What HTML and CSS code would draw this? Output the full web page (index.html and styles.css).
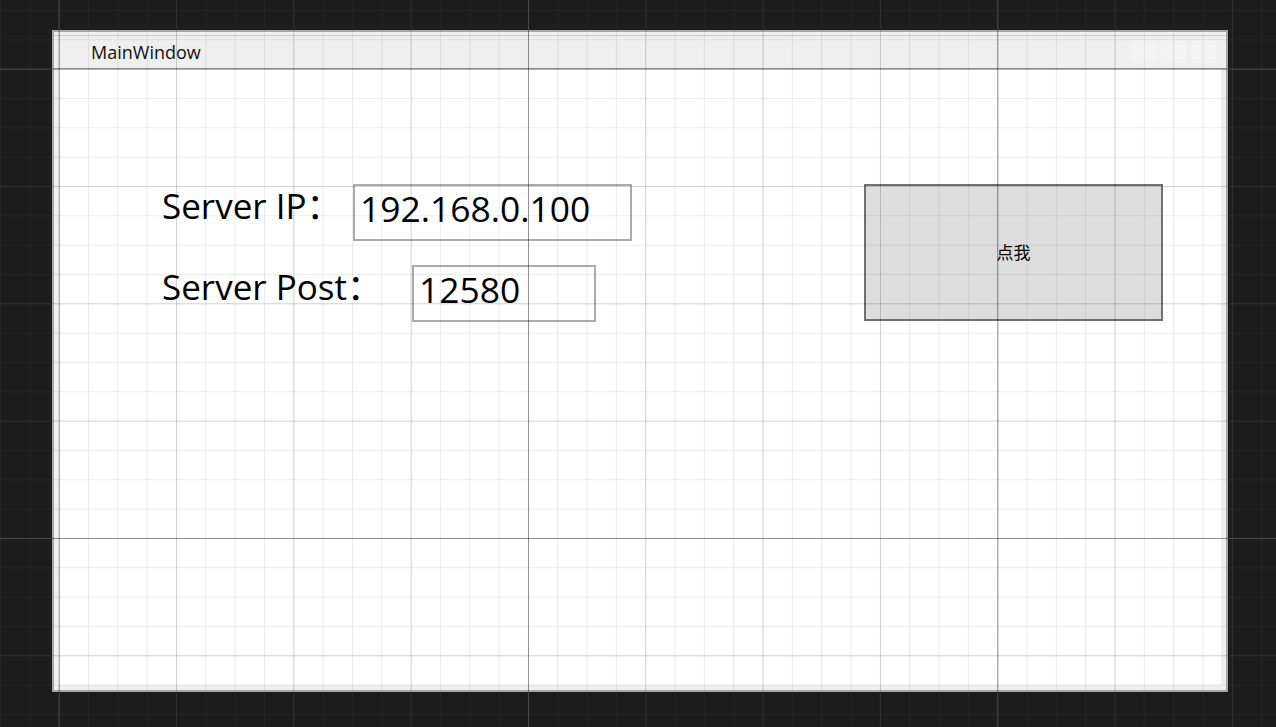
FILE: index.html
```html
<!DOCTYPE html>
<html lang="zh-CN">
<head>
<meta charset="utf-8">
<title>MainWindow</title>
<link rel="stylesheet" href="styles.css">
</head>
<body>
  <div class="window">
    <div class="titlebar">
      <span class="title">MainWindow</span>
      <div class="caption-buttons">
        <span class="cap-btn"></span>
        <span class="cap-btn"></span>
        <span class="cap-btn"></span>
      </div>
    </div>
    <div class="client">
      <div class="form">
        <div class="row">
          <span class="label label-ip">Server IP：</span>
          <div class="textbox textbox-ip">192.168.0.100</div>
        </div>
        <div class="row">
          <span class="label label-port">Server Post：</span>
          <div class="textbox textbox-port">12580</div>
        </div>
      </div>
      <button class="btn" type="button">点我</button>
    </div>
  </div>
</body>
</html>
```

FILE: styles.css
```css
html {
  background-color: #1c1c1c;
  background-image:
    linear-gradient(to right, rgba(255,255,255,0.13) 0, rgba(255,255,255,0.13) 1px, transparent 1px),
    linear-gradient(to bottom, rgba(255,255,255,0.13) 0, rgba(255,255,255,0.13) 1px, transparent 1px),
    linear-gradient(to right, rgba(255,255,255,0.05) 0, rgba(255,255,255,0.05) 1px, transparent 1px),
    linear-gradient(to bottom, rgba(255,255,255,0.05) 0, rgba(255,255,255,0.05) 1px, transparent 1px),
    linear-gradient(to right, rgba(255,255,255,0.035) 0, rgba(255,255,255,0.035) 1px, transparent 1px),
    linear-gradient(to bottom, rgba(255,255,255,0.035) 0, rgba(255,255,255,0.035) 1px, transparent 1px);
  background-size:
    469.333px 100%, 100% 469.333px,
    117.333px 100%, 100% 117.333px,
    29.333px 100%, 100% 29.333px;
  background-position: 58.667px 68.667px;
  background-attachment: fixed;
  height: 100%;
}

body {
  margin: 0;
  height: 727px;
  overflow: hidden;
  font-family: "Open Sans", "Noto Sans CJK SC", sans-serif;
  color: #000;
}

.window {
  position: relative;
  box-sizing: border-box;
  width: 1176px;
  height: 662px;
  margin: 30px 0 0 52px;
  border: 2px solid #a6a6a6;
  background: #efefef;
  display: flex;
  flex-direction: column;
}

.window::after {
  content: "";
  position: absolute;
  inset: -2px;
  pointer-events: none;
  background-image:
    linear-gradient(to right, rgba(0,0,0,0.32) 0, rgba(0,0,0,0.32) 1px, transparent 1px),
    linear-gradient(to bottom, rgba(0,0,0,0.32) 0, rgba(0,0,0,0.32) 1px, transparent 1px),
    linear-gradient(to right, rgba(0,0,0,0.12) 0, rgba(0,0,0,0.12) 1px, transparent 1px),
    linear-gradient(to bottom, rgba(0,0,0,0.12) 0, rgba(0,0,0,0.12) 1px, transparent 1px),
    linear-gradient(to right, rgba(0,0,0,0.075) 0, rgba(0,0,0,0.075) 1px, transparent 1px),
    linear-gradient(to bottom, rgba(0,0,0,0.075) 0, rgba(0,0,0,0.075) 1px, transparent 1px);
  background-size:
    469.333px 100%, 100% 469.333px,
    117.333px 100%, 100% 117.333px,
    29.333px 100%, 100% 29.333px;
  background-position: 58.667px 68.667px;
  background-attachment: fixed;
}

.titlebar {
  margin-top: 3px;
  border-top: 1px solid #cdcdcd;
  border-bottom: 1px solid #a9a9a9;
  height: 32px;
  display: flex;
  align-items: center;
  padding-left: 37px;
  padding-right: 9px;
}

.title {
  font-size: 18px;
  line-height: 1;
  color: #111;
}

.caption-buttons {
  margin-left: auto;
  display: flex;
  gap: 4px;
  margin-top: -1px;
}

.cap-btn {
  width: 26px;
  height: 23px;
  background: #f3f3f3;
}

.client {
  flex: 1;
  margin: 0 5px 5px 4px;
  background: #ffffff;
  display: flex;
  justify-content: space-between;
  align-items: flex-start;
  padding: 115px 58px 0 104px;
}

.form {
  display: flex;
  flex-direction: column;
  gap: 24px;
  width: 470px;
}

.row {
  display: flex;
  align-items: flex-start;
}

.label {
  font-size: 35px;
  line-height: 36px;
  margin-top: 4px;
  white-space: nowrap;
}

.label-ip { width: 191px; }
.label-port { width: 250px; }

.textbox {
  box-sizing: border-box;
  height: 57px;
  border: 2px solid #ababab;
  background: #ffffff;
  font-size: 35.4px;
  line-height: 36px;
  padding: 4px 0 0 5px;
}

.textbox-ip { width: 279px; }
.textbox-port { width: 184px; }

.btn {
  box-sizing: border-box;
  width: 299px;
  height: 137px;
  border: 2px solid #707070;
  background: #dddddd;
  font-family: "Noto Sans CJK SC", sans-serif;
  font-size: 17px;
  color: #000;
  padding: 0 0 3px 0;
  margin: 0;
}
```
